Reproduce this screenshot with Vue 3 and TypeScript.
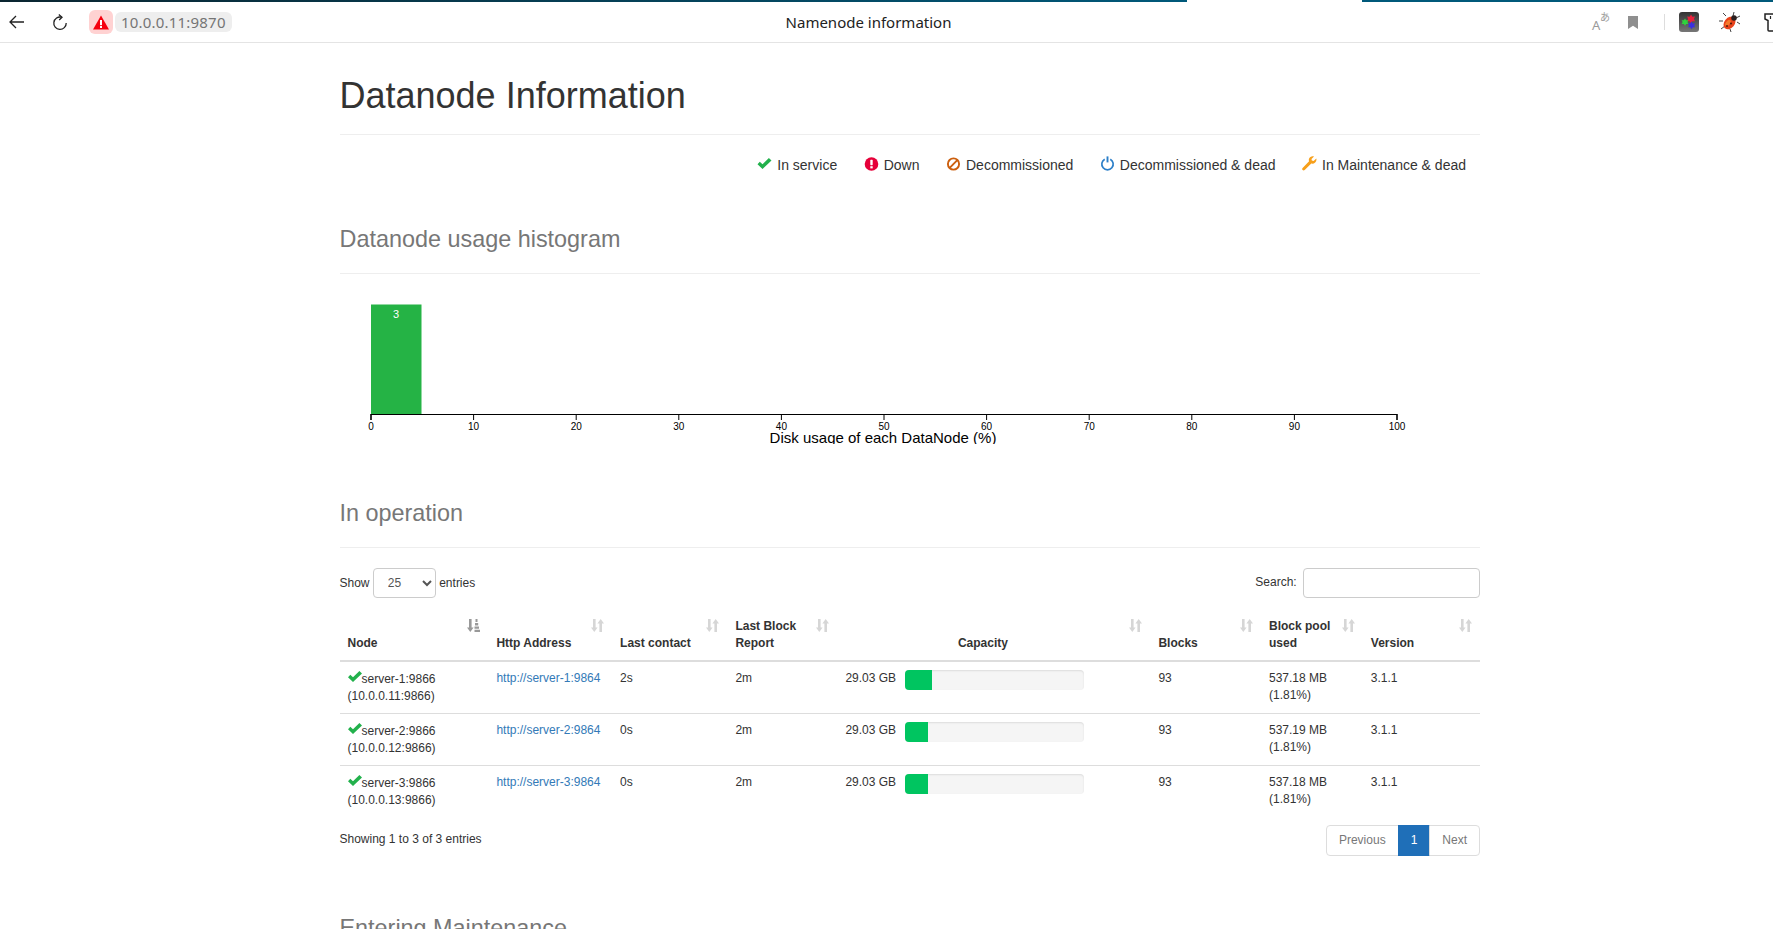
<script setup lang="ts">
interface Node {
  name: string
  addr: string
  link: string
  contact: string
  pool: string
  used: number
}

const nodes: Node[] = [
  { name: 'server-1:9866', addr: '(10.0.0.11:9866)', link: 'http://server-1:9864', contact: '2s', pool: '537.18 MB', used: 27 },
  { name: 'server-2:9866', addr: '(10.0.0.12:9866)', link: 'http://server-2:9864', contact: '0s', pool: '537.19 MB', used: 23 },
  { name: 'server-3:9866', addr: '(10.0.0.13:9866)', link: 'http://server-3:9864', contact: '0s', pool: '537.18 MB', used: 23 },
]

const ticks = [0, 10, 20, 30, 40, 50, 60, 70, 80, 90, 100]
const tickX = (t: number) => 31 + t * 10.26

const columns = [
  { key: 'node', label: 'Node', sorted: true },
  { key: 'http', label: 'Http Address' },
  { key: 'contact', label: 'Last contact' },
  { key: 'report', label: 'Last Block Report' },
  { key: 'capacity', label: 'Capacity' },
  { key: 'blocks', label: 'Blocks' },
  { key: 'pool', label: 'Block pool used' },
  { key: 'version', label: 'Version' },
]
</script>

<template>
  <div class="window">
    <div class="loadbar">
      <span class="load-left"></span>
      <span class="load-right"></span>
    </div>
    <header class="toolbar">
      <div class="nav-side">
        <svg class="back" width="16" height="14" viewBox="0 0 16 14">
          <path d="M7 1 1 7l6 6M1 7h14" fill="none" stroke="#222" stroke-width="1.3" />
        </svg>
        <svg class="reload" width="16" height="17" viewBox="0 0 16 17">
          <path d="M9.5 3.2A6.2 6.2 0 1 0 14.2 9" fill="none" stroke="#222" stroke-width="1.3" />
          <path d="M6.8.6 10 3.2 7.2 6" fill="none" stroke="#222" stroke-width="1.3" />
        </svg>
        <span class="warn">
          <svg width="16" height="15" viewBox="0 0 16 15">
            <path d="M8 .5 16 14.5H0Z" fill="#f5000f" />
            <rect x="7" y="5" width="2" height="5.2" fill="#fff" />
            <rect x="7" y="11" width="2" height="2" fill="#fff" />
          </svg>
        </span>
        <span class="address">10.0.0.11:9870</span>
      </div>
      <div class="tab-title">Namenode information</div>
      <div class="ext-side">
        <span class="translate">A<small>あ</small></span>
        <svg class="bookmark" width="10" height="13" viewBox="0 0 10 13">
          <path d="M0 0h10v13L5 9.8 0 13Z" fill="#8f8f8f" />
        </svg>
        <span class="sep"></span>
        <svg class="app" width="20" height="20" viewBox="0 0 20 20">
          <defs>
            <linearGradient id="appbg" x1="0" y1="0" x2="0" y2="1">
              <stop offset="0" stop-color="#333" />
              <stop offset="1" stop-color="#777" />
            </linearGradient>
          </defs>
          <rect width="20" height="20" rx="3" fill="url(#appbg)" />
          <path d="M12 2.5l1.4 2.3 2.6-.2-1.1 2.4 1.1 2.3-2.6-.1-1.4 2.2-1.4-2.2-2.5.1 1-2.3-1-2.4 2.5.2Z" fill="#e8213b" />
          <path d="M6 6.5l1.2 1.8 2.2-.1-1 1.9 1 1.9-2.2-.1L6 13.7l-1.2-1.8-2.2.1 1-1.9-1-1.9 2.2.1Z" fill="#2fd23c" />
          <path d="M12.5 9.5l1.3 1.9 2.3-.1-1 2 1 2-2.3-.1-1.3 2-1.2-2-2.3.1 1-2-1-2 2.3.1Z" fill="#3b2fe0" />
        </svg>
        <svg class="bug" width="22" height="22" viewBox="0 0 22 22">
          <g stroke="#444" stroke-width="1" fill="none">
            <path d="M14 5l1-4M17 7l4-2M18 11l3 2M7 5 4 2M4 10H0M6 15l-4 3M11 18l1 3" />
          </g>
          <ellipse cx="10.5" cy="12" rx="5.2" ry="7" transform="rotate(40 10.5 12)" fill="#e8431c" />
          <ellipse cx="9" cy="12" rx="2" ry="3.6" transform="rotate(40 9 12)" fill="#f47a2c" />
          <circle cx="15" cy="7" r="2.8" fill="#2a2020" />
          <circle cx="12" cy="12.5" r="1.1" fill="#561a0a" />
          <circle cx="8" cy="15" r="1" fill="#561a0a" />
        </svg>
        <svg class="torch" width="16" height="19" viewBox="0 0 16 19">
          <path d="M1 1h12l1 5-2.5 1.5V17a1 1 0 0 1-1 1H5a1 1 0 0 1-1-1V7.5L1 6Z" fill="#fff" stroke="#222" stroke-width="1.5" />
          <path d="M6.5 3v3" stroke="#222" stroke-width="1.2" />
        </svg>
      </div>
    </header>

    <main class="page">
      <div class="page-header">
        <h1>Datanode Information</h1>
      </div>

      <ul class="legend">
        <li>
          <svg class="i-ok" width="14" height="11" viewBox="0 0 14 11"><path d="M0 6.3 2.3 3.8 5 6.2 11.4 0 14 2.4 5 11Z" /></svg>
          In service
        </li>
        <li>
          <svg width="14" height="14" viewBox="0 0 14 14">
            <circle cx="7" cy="7" r="6.8" fill="#e60039" />
            <rect x="5.8" y="2.8" width="2.4" height="5.4" rx=".6" fill="#fff" />
            <rect x="5.8" y="9.2" width="2.4" height="2.2" fill="#fff" />
          </svg>
          Down
        </li>
        <li>
          <svg width="14" height="14" viewBox="0 0 14 14">
            <circle cx="7" cy="7" r="5.6" fill="none" stroke="#cc5f0e" stroke-width="1.9" />
            <path d="M3.2 10.8 10.8 3.2" stroke="#cc5f0e" stroke-width="1.9" />
          </svg>
          Decommissioned
        </li>
        <li>
          <svg width="14" height="15" viewBox="0 0 14 15">
            <path d="M4.2 3.2a5.7 5.7 0 1 0 5.6 0" fill="none" stroke="#2c7fc9" stroke-width="1.7" />
            <path d="M7 .4v6" stroke="#2c7fc9" stroke-width="1.9" />
          </svg>
          Decommissioned &amp; dead
        </li>
        <li>
          <svg width="15" height="15" viewBox="0 0 15 15">
            <path d="M14.3 2.6 11.6 5 9.8 4.6 9.5 2.9 12 .5C10 -.2 7.7.8 7 2.7c-.3 1-.2 1.9.1 2.6L.6 12c-.6.6-.6 1.5 0 2.1.6.6 1.5.6 2.1 0l6.6-6.6c2.7.8 5.9-1.6 5-4.9Z" fill="#f7a01b" />
          </svg>
          In Maintenance &amp; dead
        </li>
      </ul>

      <section class="section">
        <h2 class="section-head">Datanode usage histogram</h2>
      </section>
      <svg class="histogram" width="1140" height="150" viewBox="0 0 1140 150">
        <rect x="31" y="10.500" width="50.500" height="109.500" fill="#25b345" />
        <text x="56" y="24" class="bar-label">3</text>
        <path d="M31 126V120.500H1057V126" fill="none" stroke="#000" stroke-width="1.200" />
        <g v-for="t in ticks" :key="t">
          <line :x1="tickX(t)" :x2="tickX(t)" y1="120" y2="126" stroke="#000" stroke-width="1" />
          <text :x="tickX(t)" y="136" class="tick-label">{{ t }}</text>
        </g>
        <text x="543" y="149" class="axis-label">Disk usage of each DataNode (%)</text>
      </svg>

      <section class="section operation">
        <h2 class="section-head">In operation</h2>
      </section>

      <div class="table-tools">
        <label class="length">
          Show
          <select>
            <option>25</option>
            <option>50</option>
            <option>100</option>
          </select>
          entries
        </label>
        <label class="search">
          Search:
          <input type="search" />
        </label>
      </div>

      <table class="nodes">
        <thead>
          <tr>
            <th v-for="col in columns" :key="col.key" :class="'col-' + col.key">
              {{ col.label }}
              <svg class="sort" width="13" height="13" viewBox="0 0 13 13">
                <g :fill="col.sorted ? '#999' : '#d6d6d6'">
                  <path d="M2 0h2.600v8.500H6.600L3.300 13 0 8.500h2Z" />
                  <path v-if="!col.sorted" d="M8.400 13H11V4.500h2L9.700 0 6.400 4.500h2Z" />
                  <path v-else d="M8.500 0h2v3h-2ZM8 4h3.200v2.500H8ZM7.500 7.500h4.500v2.200H7.500ZM7.500 10.800H13V13H7.500Z" />
                </g>
              </svg>
            </th>
          </tr>
        </thead>
        <tbody>
          <tr v-for="n in nodes" :key="n.name">
            <td class="node-cell">
              <svg class="i-ok row-ok" width="14" height="11" viewBox="0 0 14 11"><path d="M0 6.3 2.3 3.8 5 6.2 11.4 0 14 2.4 5 11Z" /></svg>{{ n.name }}<br />{{ n.addr }}
            </td>
            <td><a class="link">{{ n.link }}</a></td>
            <td>{{ n.contact }}</td>
            <td>2m</td>
            <td>
              <div class="capacity">
                <span class="cap-text">29.03 GB</span>
                <div class="bar"><div class="bar-fill" :style="{ width: n.used + 'px' }"></div></div>
              </div>
            </td>
            <td>93</td>
            <td>{{ n.pool }}<br />(1.81%)</td>
            <td>3.1.1</td>
          </tr>
        </tbody>
      </table>

      <div class="table-foot">
        <div class="info">Showing 1 to 3 of 3 entries</div>
        <div class="pager">
          <a>Previous</a>
          <a class="current">1</a>
          <a>Next</a>
        </div>
      </div>

      <section class="section maintenance">
        <h2 class="section-head">Entering Maintenance</h2>
      </section>
    </main>
  </div>
</template>

<style>
html,
body {
  margin: 0;
  background: #fff;
  overflow: hidden;
}
</style>

<style scoped>
.window {
  height: 929px;
  overflow: hidden;
  font-family: "Liberation Sans", Arial, sans-serif;
  color: #333;
}

.loadbar {
  display: flex;
  height: 2px;
}
.load-left {
  width: 1187px;
  background: linear-gradient(90deg, #0a2530, #00597a);
}
.load-right {
  margin-left: 175px;
  flex: 1;
  background: #00597a;
}

.toolbar {
  position: relative;
  display: flex;
  justify-content: space-between;
  align-items: center;
  height: 40px;
  border-bottom: 1px solid #e4e4e4;
  font-family: "Noto Sans", sans-serif;
}
.nav-side {
  display: flex;
  align-items: center;
  padding-left: 9px;
}
.back {
  margin-right: 27px;
}
.reload {
  margin-right: 21px;
}
.warn {
  display: flex;
  align-items: center;
  justify-content: center;
  width: 24px;
  height: 24px;
  border-radius: 6px;
  background: #ffd2d2;
}
.address {
  margin-left: 2px;
  padding: 0 6px;
  height: 20px;
  line-height: 20px;
  border-radius: 6px;
  background: #eee;
  color: #757575;
  font-size: 15px;
  letter-spacing: .2px;
}
.tab-title {
  position: absolute;
  left: 0;
  right: 36px;
  text-align: center;
  font-size: 15px;
  color: #222;
}
.ext-side {
  display: flex;
  align-items: center;
  width: 181px;
  flex: none;
}
.ext-side > * {
  flex: none;
}
.translate {
  position: relative;
  width: 18px;
  color: #9a9a9a;
  font-size: 13px;
  padding-top: 6px;
  font-family: "Noto Sans", "Noto Sans CJK JP", sans-serif;
}
.translate small {
  position: absolute;
  left: 8px;
  top: -1px;
  font-size: 10px;
}
.bookmark {
  margin-left: 18px;
}
.sep {
  width: 1px;
  height: 16px;
  margin-left: 26px;
  background: #ddd;
}
.app {
  margin-left: 14px;
}
.bug {
  margin-left: 20px;
}
.torch {
  margin-left: 23px;
}

.page {
  width: 1140.5px;
  margin-left: 339.5px;
}

.page-header {
  margin-top: 33px;
  padding-bottom: 8px;
  border-bottom: 1px solid #eee;
}
h1 {
  margin: 0 0 10px;
  font-size: 36px;
  font-weight: 500;
  line-height: 40px;
  color: #333;
}

.legend {
  display: flex;
  justify-content: flex-end;
  gap: 26.5px;
  list-style: none;
  margin: 20px 0 0;
  padding: 0 14px 0 0;
  font-size: 14px;
  line-height: 20px;
}
.legend li {
  display: flex;
  align-items: center;
  gap: 5px;
}
.legend li svg {
  flex: none;
  width: 15px;
  margin-top: -3px;
}
.i-ok {
  fill: #22b14c;
}

.section {
  margin-top: 51px;
  padding-bottom: 11px;
  border-bottom: 1px solid #eee;
}
.section-head {
  margin: 0 0 10px;
  font-size: 23.4px;
  font-weight: 500;
  line-height: 26px;
  color: #777;
}
.operation {
  margin-top: 56px;
}
.maintenance {
  margin-top: 59px;
}

.histogram {
  display: block;
  margin-top: 20px;
}
.bar-label {
  fill: #fff;
  font-size: 11px;
  text-anchor: middle;
}
.tick-label {
  fill: #000;
  font-size: 10px;
  text-anchor: middle;
}
.axis-label {
  fill: #000;
  font-size: 15px;
  text-anchor: middle;
}

.table-tools {
  display: flex;
  justify-content: space-between;
  align-items: center;
  margin-top: 20px;
  font-size: 12px;
}
.table-tools select {
  width: 63px;
  height: 30px;
  padding: 0 10px;
  margin: 0;
  border: 1px solid #ccc;
  border-radius: 4px;
  background: #fff;
  color: #555;
  font: 12px "Liberation Sans", Arial, sans-serif;
}
.search input {
  width: 177px;
  height: 30px;
  box-sizing: border-box;
  margin-left: 3px;
  padding: 5px 10px;
  border: 1px solid #ccc;
  border-radius: 4px;
  vertical-align: middle;
}

.nodes {
  width: 100%;
  margin-top: 12px;
  border-collapse: collapse;
  table-layout: fixed;
  font-size: 12px;
  line-height: 17px;
}
.nodes th {
  position: relative;
  box-sizing: border-box;
  padding: 8px 30px 8px 8px;
  border-bottom: 2px solid #ddd;
  text-align: left;
  vertical-align: bottom;
}
.nodes td {
  box-sizing: border-box;
  height: 52px;
  padding: 8px;
  border-top: 1px solid #ddd;
  vertical-align: top;
}
.nodes td.node-cell {
  padding-top: 9px;
}
.nodes tbody tr:first-child td {
  border-top: 0;
}
.col-node { width: 148.9px; }
.col-http { width: 123.7px; }
.col-contact { width: 115.3px; }
.col-report { width: 110px; }
.col-capacity { width: 313px; }
.col-blocks { width: 110.6px; }
.col-pool { width: 101.8px; }
.col-version { width: 117.1px; }
.nodes th.col-capacity {
  text-align: center;
}
.sort {
  position: absolute;
  top: 9px;
  right: 8px;
}
.row-ok {
  vertical-align: 1px;
}
.link {
  color: #337ab7;
}

.capacity {
  display: flex;
  gap: 9px;
}
.bar {
  width: 179px;
  height: 20px;
  border-radius: 4px;
  overflow: hidden;
  background: #f5f5f5;
  box-shadow: inset 0 1px 2px rgba(0, 0, 0, .1);
}
.bar-fill {
  height: 100%;
  background: #00c560;
}

.table-foot {
  display: flex;
  justify-content: space-between;
  align-items: flex-start;
  margin-top: 7px;
  font-size: 12px;
}
.info {
  padding-top: 7px;
}
.pager {
  display: flex;
  line-height: 17px;
}
.pager a {
  padding: 6px 12px;
  border: 1px solid #ddd;
  margin-left: -1px;
  color: #777;
}
.pager a:first-child {
  border-radius: 4px 0 0 4px;
}
.pager a:last-child {
  border-radius: 0 4px 4px 0;
}
.pager .current {
  background: #1f6fb8;
  border-color: #1f6fb8;
  color: #fff;
}
</style>
